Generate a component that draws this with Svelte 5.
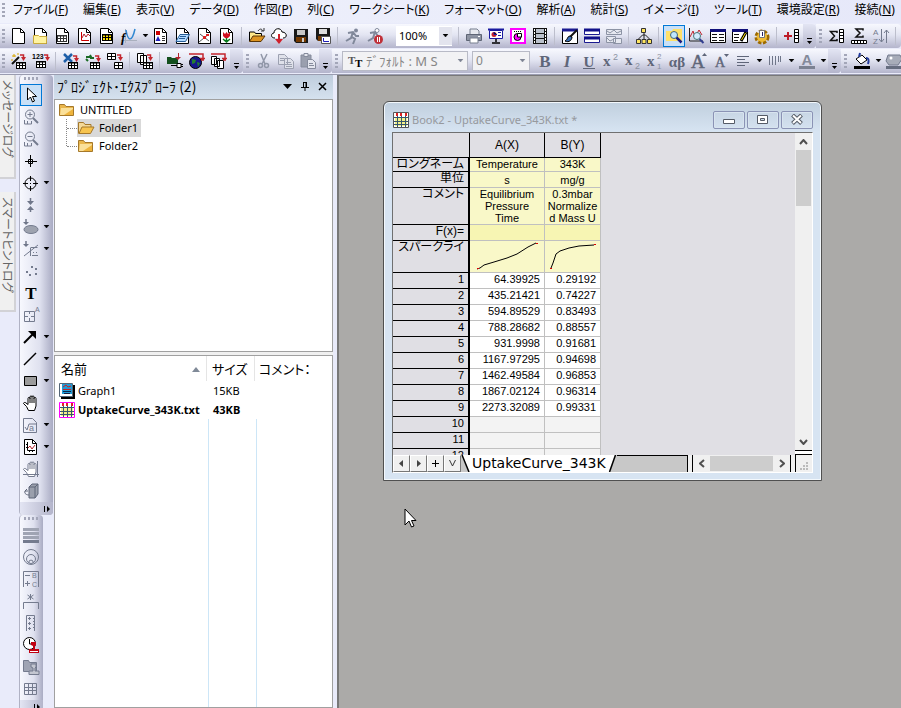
<script lang="ts">
  type Tool = { icon?: string; label?: string; drop?: boolean; active?: boolean; sep?: boolean }

  const sep: Tool = { sep: true }
  const t = (icon: string, label: string, extra: Partial<Tool> = {}): Tool => ({ icon, label, ...extra })

  const menus = [
    ['ファイル', 'F'], ['編集', 'E'], ['表示', 'V'], ['データ', 'D'], ['作図', 'P'],
    ['列', 'C'], ['ワークシート', 'K'], ['フォーマット', 'O'], ['解析', 'A'], ['統計', 'S'],
    ['イメージ', 'I'], ['ツール', 'T'], ['環境設定', 'R'], ['接続', 'N'],
  ]

  const fileTools = [
    t('page', 'New project'), t('pageFolder', 'New folder'), t('pageGrid', 'New workbook'),
    t('pageGraph', 'New graph'), t('pageMatrix', 'New matrix'), t('func', 'New function plot', { drop: true }),
    t('pageLayout', 'New layout'), t('pageNotes', 'New notes'), t('pageExcel', 'New 3D'), t('pageImage', 'New image'),
    sep, t('open', 'Open'), t('cloud', 'Open template'), t('save', 'Save'), t('saveTpl', 'Save template'),
    sep, t('run', 'Recalculate'), t('runStop', 'Stop recalculation'),
  ]
  const viewTools = [
    sep, t('print', 'Print'), t('present', 'Slide show'), t('pinkDoc', 'Send to slides'), t('film', 'Video'),
    sep, t('brush', 'Code builder'), t('split', 'Split'), t('splitOff', 'Merge'),
    sep, t('treeMap', 'Project tree'),
    sep, t('explorer', 'Project explorer', { active: true }), t('viewer', 'Quick viewer'), t('results', 'Results log'),
    t('script', 'Script window'), t('gear', 'Customize'), sep, t('addCol', 'Add column'),
  ]
  const statTools = [t('sumCol', 'Column statistics'), t('sumRow', 'Row statistics'), t('sort', 'Sort'), sep]

  const importTools = [
    t('wand', 'Import wizard'), t('ascii', 'Import ASCII'), sep,
    t('xls', 'Import Excel'), t('reimport', 'Reimport'), t('tables', 'Import tables'), sep,
    t('multi', 'Import multiple ASCII'), sep,
    t('connect', 'Connect file'), t('globe', 'Connect web'), t('pages', 'Connect pages'),
  ]
  const editTools = [t('cut', 'Cut'), t('copy', 'Copy'), t('paste', 'Paste')]
  const formatTools = [
    t('bold', 'Bold'), t('italic', 'Italic'), t('underline', 'Underline'), t('sup', 'Superscript'),
    t('sub', 'Subscript'), t('supsub', 'Super-subscript'), t('greek', 'Greek'), t('bigger', 'Increase font'),
    t('smaller', 'Decrease font'), t('align', 'Align', { drop: true }), t('vert', 'Vertical lines', { drop: true }),
    t('fontColor', 'Font color', { drop: true }),
  ]
  const styleTools = [t('bucket', 'Fill color', { drop: true }), t('palette', 'Palette')]

  const drawTools = [
    t('pointer', 'Pointer', { active: true }), t('zoomIn', 'Zoom in'), t('zoomOut', 'Zoom out'),
    t('reader', 'Screen reader'), t('target', 'Data reader', { drop: true }), t('selector', 'Data selector'),
    t('mask', 'Mask', { drop: true }), t('region', 'Region', { drop: true }), t('dots', 'Draw data'),
    t('text', 'Text'), t('annot', 'Annotation'), t('arrow', 'Arrow', { drop: true }), t('line', 'Line', { drop: true }),
    t('rect', 'Rectangle', { drop: true }), t('hand', 'Pan'), t('sqrt', 'Equation', { drop: true }),
    t('graphIns', 'Insert graph', { drop: true }), t('handAxis', 'Rescale'), t('cube', 'Rotate'),
  ]
  const graphTools = [
    t('bars', 'Layers'), t('rings', 'Contour'), t('legend', 'Legend'), t('bracket', 'Bracket'),
    t('scale', 'Scale'), t('stamp', 'Date stamp'), t('stampOff', 'Project path'), t('table', 'Table'),
  ]

  const P = '<path d="M1.500.500h8l4 4v11h-12z" fill="#fff" stroke="#000"/><path d="M9.500.500v4h4" fill="none" stroke="#000"/>'
  const G = '#747b8e'
  const grid = (x: number, y: number, fill = '#fff', c = '#000') =>
    `<path d="M${x} ${y}h10v7h-10z" fill="${fill}"/><path d="M${x} ${y + 1}h10M${x} ${y + 3.5}h10M${x} ${y + 6.5}h10M${x + 0.5} ${y}v7M${x + 3.5} ${y}v7M${x + 6.5} ${y}v7M${x + 9.5} ${y}v7M${x} ${y + 0.5}h10" stroke="${c}"/>`
  const redArrow = (x: number, y: number) =>
    `<path d="M${x} ${y}h3.500v4" fill="none" stroke="#c3262e" stroke-width="1.500"/><path d="M${x + 1} ${y + 2}h5l-2.500 4z" fill="#c3262e"/>`
  const glyph = (s: string, size = 16, style = '') =>
    `<text x="8" y="14" text-anchor="middle" font-family="Liberation Serif, serif" font-size="${size}" font-weight="bold" fill="#5f6679" ${style}>${s}</text>`
  const base = (y: number) =>
    `<text x="0" y="${y}" font-size="15" font-weight="bold" font-family="Liberation Serif, serif" fill="#5f6679">x</text>`
  const small = (s: string, y: number, size = 9) =>
    `<text x="10" y="${y}" font-size="${size}" font-family="Liberation Sans, sans-serif" fill="#8b92a2">${s}</text>`
  const mag = (s: string) =>
    `<g fill="none" stroke="${G}"><circle cx="7" cy="5.500" r="4.500"/><path d="M10 9l5 5" stroke-width="2"/><path d="M4.500 5.500h5${s}"/><path d="M1.500 11v4h7v-3M4.500 15v-3"/></g>`
  const hand = (c: string) =>
    `<path d="M5.500 15.500l-2-4-3-3c0-1 1.500-1.500 2.500-.5L5 9.500V3.500c0-1.500 2-1.500 2 0V2c0-1.500 2-1.500 2 0v0c0-1.500 2-1.500 2 0v1.500c0-1.500 2-1.500 2 0V11l-1.500 4.500z" fill="#fff" stroke="${c}"/><path d="M7 3v5M9 2v6M11 3v5" stroke="${c}" fill="none"/>`

  const icons: Record<string, string> = {
    page: P,
    pageFolder: P + '<path d="M.5 7.500h5l1 1h7v7H.5z" fill="#fff3a0" stroke="#c9a93a"/>',
    pageGrid: P + grid(2, 7, '#fff', '#333'),
    pageGraph: P + '<path d="M4.500 4v8.500H12" stroke="#c00" fill="none"/><path d="M5 10l2-4 2 3 2-3 2 2" stroke="#b2232c" fill="none"/>',
    pageMatrix: P + grid(3, 6, '#ffe100', '#000'),
    func: '<path d="M4.500 1v14M0 12.500h16" stroke="#aab0be" fill="none"/><path d="M5 2c2 12 6 12 9-1" stroke="#2e86d1" stroke-width="1.500" fill="none"/><text x="0" y="14" font-family="Liberation Serif, serif" font-style="italic" font-weight="bold" font-size="13">f</text>',
    pageLayout: P + '<path d="M3 3h4v4H3z" fill="#c00"/><path d="M2.500 13L5 8l2.500 5z" fill="#22b"/><path d="M9 8.500h3M9 10.500h3M9 12.500h3" stroke="#333"/>',
    pageNotes: P + '<path d="M5 6.500h9.500l-4 7H1z" fill="#b5dbff" stroke="#265d96"/><path d="M5 8.500h6M4 10.500h6" stroke="#265d96"/>',
    pageExcel: P + '<path d="M2 14L12 6M3 6l9 7" stroke="#555"/><path d="M6 8h3v3H6z" fill="#d22"/><path d="M9 6h3v2H9z" fill="#d22"/>',
    pageImage: P + '<path d="M4 4l2 2 1.500-2L9 6l2-2v4l-2 2H6L4 8z" fill="#d01020"/><path d="M7.500 10v5M4 11l3.500 3L11 11" stroke="#087a1c" stroke-width="1.500" fill="none"/>',
    open: '<path d="M.5 13V4h5l1 1.500h6V8" fill="#ffe88a" stroke="#000"/><path d="M.5 13.500L4 8h12l-4 5.500z" fill="#dd9420" stroke="#5a3505"/><path d="M9 3c2-3 4-2 5 0M12 3h3V0" fill="none" stroke="#333"/>',
    cloud: '<path d="M4 10C-1 10 0 5 3 5c0-5 7-6 8-1 5 0 6 6 1 6" fill="#fff" stroke="#000"/><path d="M8 6v7" stroke="#d0202b" stroke-width="2"/><path d="M4 11h8l-4 5z" fill="#d0202b"/>',
    save: '<path d="M1 1h14v14H3l-2-2z" fill="#181818"/><path d="M4 2h8v5H4z" fill="#c6c6c6"/><path d="M3 9h10v5H3z" fill="#733800"/><path d="M9 10h2v4H9z" fill="#ccc"/>',
    saveTpl: '<path d="M1 0h14v13H3l-2-2z" fill="#181818"/><path d="M4 1h8v5H4z" fill="#ddd"/><path d="M3 8h4v5H3z" fill="#733800"/><path d="M6.500 8.500h9v7h-9z" fill="#fff" stroke="#555"/><path d="M8.500 10v3.500H14" stroke="#1c1cb8" fill="none"/>',
    run: '<circle cx="11" cy="2.500" r="2" fill="#80889a"/><path d="M3 5l5-1 3 4h3M8 4l-2 6-5 3M7 9l3 2-2 5" fill="none" stroke="#80889a" stroke-width="2"/>',
    runStop: '<circle cx="10" cy="2.500" r="2" fill="#fff" stroke="#80889a"/><path d="M3 5l5-1 3 4M8 4l-2 6-5 3" fill="none" stroke="#80889a" stroke-width="2"/><circle cx="11.500" cy="11.500" r="4.500" fill="#c03038"/><path d="M10.500 9v5M12.500 9v5" stroke="#fff"/>',
    print: '<path d="M4 1h7l2 2v4H4z" fill="#e7e9ef" stroke="#777e8e"/><path d="M.5 6.500h15v6H.5z" fill="#8e94a3" stroke="#5e6575"/><path d="M4 10h8v5H4z" fill="#fff" stroke="#777e8e"/><path d="M12 8.500h2" stroke="#fff"/>',
    present: '<path d="M0 1.500h16" stroke="#1a1aa0" stroke-width="2"/><path d="M1.500 2.500h13v8h-13z" fill="#fff" stroke="#1a1aa0"/><circle cx="6" cy="6.500" r="2.500" fill="#c8202c"/><path d="M6 4v2.500h3M10 4.500h3M10 7.500h3" stroke="#1a1aa0"/><path d="M8 11v3M4 15h8" stroke="#000" stroke-width="1.500"/>',
    pinkDoc: '<path d="M1 1h14v14H1z" fill="#fff" stroke="#f0f" stroke-width="2"/><circle cx="7.500" cy="9" r="3.500" fill="#f0f" stroke="#000"/><path d="M7.500 9V5.500h4V9z" fill="#fff" stroke="#000"/><path d="M4 3.500h8" stroke="#000" stroke-dasharray="1 1"/>',
    film: '<path d="M1 0h14v16H1z" fill="#111"/><path d="M4 1h8v4H4zM4 6h8v4H4zM4 11h8v4H4z" fill="#bbc1cc"/><path d="M2.500 1v15M13.500 1v15" stroke="#fff" stroke-dasharray="2 1"/>',
    brush: '<path d="M.5 1.500h15v14H.5z" fill="#fff" stroke="#000"/><path d="M0 2h16" stroke="#1a1a90" stroke-width="3"/><path d="M15 2L8 9" stroke="#111" stroke-width="2"/><path d="M8 8c-3 0-2 4-5 5 4 2 7-1 7-4z" fill="#3a70b8" stroke="#000"/>',
    split: '<path d="M.5 1.500h15v5H.5zM.5 9.500h15v5H.5z" fill="#fff" stroke="#1a1a90"/><path d="M0 2h16M0 10h16" stroke="#10108a" stroke-width="3"/>',
    splitOff: '<path d="M.5 1.500h15v5H.5zM.5 8.500h9v6h-9zM7.500 10.500h8v5h-8z" fill="#e6e8f0" stroke="#8c93a4"/><path d="M1 3l3 2 4-3 3 3 4-2M1 10l3 3 4-2" stroke="#8c93a4" fill="none"/>',
    treeMap: '<path d="M8 5v6M2.500 11l4-4h3l4 4" fill="none" stroke="#222"/><path d="M5.500.500h4v4h-4zM.5 11.500h4v4h-4zM6 11.500h4v4H6zM11.500 11.500h4v4h-4z" fill="#ffe560" stroke="#333"/>',
    explorer: '<path d="M0 3h6l1-2h9v12H0z" fill="#ffe169"/><circle cx="8" cy="7" r="3.500" fill="#bfe6ff" stroke="#467"/><path d="M10.500 9.500l5 5" stroke="#1a1a80" stroke-width="2.500"/>',
    viewer: '<path d="M1.500 0v13H15" fill="none" stroke="#222"/><path d="M2 9l3-6 2 6 4-7 3 5" stroke="#c2242e" fill="none"/><circle cx="9" cy="8" r="3.500" fill="#d5ecff" stroke="#477"/><path d="M11.500 11l4 4" stroke="#333f90" stroke-width="2"/>',
    results: '<path d="M.5 1.500h15v13H.5z" fill="#fff" stroke="#000"/><path d="M0 2.500h16" stroke="#10107a" stroke-width="3"/><path d="M2 6.500h5M9 6.500h5M2 9.500h5M9 9.500h5M2 12.500h5M9 12.500h5" stroke="#111"/>',
    script: '<path d="M.5 1.500h15v13H.5z" fill="#fff" stroke="#000"/><path d="M0 2.500h16" stroke="#10107a" stroke-width="3"/><path d="M2 6.500h5M2 9.500h5M2 12.500h4" stroke="#111"/><path d="M14 4l-5 9" stroke="#000" stroke-width="3"/><path d="M13.500 5l-4 7" stroke="#ffe100"/>',
    gear: '<circle cx="8" cy="9" r="5.500" fill="#eebc38" stroke="#9c6a00" stroke-width="4" stroke-dasharray="3 1.500"/><circle cx="8" cy="9" r="5" fill="#eebc38"/><path d="M5.500 2.500h5v7h-5z" fill="#fff" stroke="#777"/><path d="M8.500 4v4" stroke="#226"/>',
    addCol: '<path d="M0 8h8M4 4v8" stroke="#bd1c28" stroke-width="2"/><path d="M10.500 1.500h4v13h-4zM10 4.500h5M10 7.500h5M10 10.500h5" fill="#fff" stroke="#000"/>',
    sumCol: '<path d="M8 5V3.500H1.500l4 4.500-4 4.500H8V11" fill="none" stroke="#111" stroke-width="1.500"/><path d="M10.500 1.500h4v13h-4zM10 4.500h5M10 7.500h5M10 10.500h5" fill="#fff" stroke="#000"/>',
    sumRow: '<path d="M12 2.500V1H5l4 4-4 4h7V7.500" fill="none" stroke="#111" stroke-width="1.500"/><path d="M.5 12.500h15v3H.5zM3.500 12v4M6.500 12v4M9.500 12v4M12.500 12v4" fill="#fff" stroke="#000"/>',
    sort: `<text x="0" y="7" font-size="8" font-family="Liberation Sans, sans-serif" fill="${G}">A</text><text x="0" y="16" font-size="8" font-family="Liberation Sans, sans-serif" fill="${G}">Z</text><path d="M8.500 1v13M6 11l2.500 3 2.500-3M13.500 15V2M11 5l2.500-3L16 5" stroke="${G}" fill="none"/>`,
    wand: '<path d="M1 11l7-7" stroke="#111" stroke-width="2"/><path d="M3 1v3M1 3h4M7 0v2M0 7h2" stroke="#d7a500"/>' + grid(5, 9) + redArrow(9, 2),
    ascii: '<text x="-1" y="6" font-size="7" font-weight="bold" font-family="Liberation Sans, sans-serif">123</text>' + grid(3, 8) + redArrow(11, 2),
    xls: '<path d="M1 1l8 8M9 1L1 9" stroke="#1e5fa8" stroke-width="2.500"/>' + grid(5, 9) + redArrow(10, 3),
    reimport: '<path d="M1 4h5l-1-2M9 5H5M3 8l-2-2" stroke="#1a6a24" stroke-width="2" fill="none"/>' + grid(5, 9) + redArrow(10, 3),
    tables: '<path d="M.5.500h8v6h-8zM0 3.500h9M4.500 0v7" fill="#fff" stroke="#000"/><path d="M7.500 9.500h8v6h-8zM7 12.500h9M11.500 9v7" fill="#fff" stroke="#000"/>' + redArrow(10, 2),
    multi: '<path d="M.5.500h6v9h-6zM3.500 2.500h6v9h-6z" fill="#fff" stroke="#000"/>' + grid(6, 9) + redArrow(10, 2),
    connect: '<path d="M0 4h4l1 1h6v6H0z" fill="#14501e"/><path d="M11.500 0v4" stroke="#b2232c" fill="none"/><path d="M8 4h6l-3 3z" fill="#b2232c"/><path d="M10 10.500h4v4h-4zM14 11.500h2M14 13.500h2M4 12.500h6" stroke="#000" fill="#fff"/>',
    globe: '<circle cx="6.500" cy="9.500" r="6" fill="#16168c" stroke="#000"/><path d="M3 6l4 1-1 3-3 1zM8 9l3 1-2 4z" fill="#23802f"/><path d="M0 1h14v4M11 5.500h5M12 7h3" stroke="#c3262e" fill="none" stroke-width="1.500"/>',
    pages: '<path d="M.5 3.500h5v8h-5zM3.500 5.500h5v8h-5zM6.500 7.500h6v8h-6z" fill="#fff" stroke="#000"/><path d="M0 1h14v4M11 5.500h5M12 7h3" stroke="#c3262e" fill="none" stroke-width="1.500"/>',
    cut: '<path d="M5 1l4 10M11 1L6 11" stroke="#9197a8" stroke-width="1.500"/><circle cx="4.500" cy="12.500" r="2" fill="none" stroke="#9197a8" stroke-width="1.500"/><circle cx="10.500" cy="12.500" r="2" fill="none" stroke="#9197a8" stroke-width="1.500"/>',
    copy: '<path d="M.5 1.500h6l3 3v7h-9zM6.500 5.500h6l3 3v7h-9z" fill="#dfe1ea" stroke="#9ca1b1"/><path d="M2 5.500h4M2 7.500h4M8 9.500h5M8 11.500h6M8 13.500h6" stroke="#9ca1b1"/>',
    paste: '<path d="M1 2h10v12H1z" fill="#9a9fae" stroke="#858b9c"/><path d="M4 .5h4v3H4z" fill="#e4e6ee" stroke="#858b9c"/><path d="M7.500 6.500h5l3 3v6h-8z" fill="#e4e6ee" stroke="#858b9c"/><path d="M9 10.500h4M9 12.500h5" stroke="#858b9c"/>',
    bold: glyph('B', 17),
    italic: glyph('I', 17, 'font-style="italic"'),
    underline: glyph('U', 15) + '<path d="M2 15.500h12" stroke="#5f6679"/>',
    sup: base(13) + small('2', 7),
    sub: base(12) + small('2', 16),
    supsub: base(13) + small('2', 6, 8) + small('1', 16, 8),
    greek: glyph('αβ', 15),
    bigger: '<text x="0" y="15" font-size="19" font-family="Liberation Serif, serif" fill="#5f6679" stroke="#5f6679" stroke-width=".5">A</text><path d="M11 3l2.500-3L16 3z" fill="#5f6679"/>',
    smaller: '<text x="2" y="14" font-size="14" font-family="Liberation Serif, serif" fill="#5f6679" stroke="#5f6679" stroke-width=".4">A</text><path d="M11 1h5l-2.500 3z" fill="#5f6679"/>',
    align: '<path d="M2 3.500h12M2 6.500h8M2 9.500h12M2 12.500h8" stroke="#5f6679"/>',
    vert: '<path d="M2.500 3v9M5.500 3v9M8.500 3v9M11.500 3v6M13.500 3v6" stroke="#6f7689"/>',
    fontColor: '<text x="8" y="12" text-anchor="middle" font-size="15" font-weight="bold" font-family="Liberation Sans, sans-serif" fill="#848a9a">A</text><path d="M0 13h16v3H0z" fill="#7c8292"/>',
    bucket: '<path d="M2 6l6-4 5 5-6 4z" fill="#fff" stroke="#000"/><path d="M5 4l1-4M12 5c3 0 3 3 2 6" stroke="#223a9a" stroke-width="2" fill="none"/><path d="M0 13h16v3H0z" fill="#000"/>',
    palette: '<path d="M2 2h12l2 4-4 6H3L0 8z" fill="#a7acb9" stroke="#747b8e"/><circle cx="5" cy="5" r="1.500" fill="#fff"/><path d="M0 13h16v3H0z" fill="#666d80"/>',
    pointer: '<path d="M4.500 1v12l3-3 2 5 2-1-2-4.500h4z" fill="#fff" stroke="#000"/>',
    zoomIn: mag('M7 3v5'),
    zoomOut: mag(''),
    reader: '<path d="M7.500 2v12M2 8.500h12M5.500 6.500h4v4h-4z" fill="none" stroke="#000"/>',
    target: '<circle cx="7.500" cy="8.500" r="5.500" fill="none" stroke="#000"/><path d="M7.500 1v5M7.500 11v5M0 8.500h5M10 8.500h5M7 8.500h1" stroke="#000"/>',
    selector: '<path d="M7.500 1v4M7.500 11v4" stroke="#6f7689" stroke-width="1.500"/><path d="M4 4h7L7.500 8zM4 13h7l-3.500-4z" fill="#6f7689"/>',
    mask: '<path d="M3 0v4" stroke="#6f7689" stroke-width="1.500"/><path d="M0 3h6L3 6z" fill="#6f7689"/><ellipse cx="8" cy="10.500" rx="7" ry="4" fill="#9ea3af" stroke="#747b8e"/>',
    region: '<path d="M3 0v4" stroke="#6f7689" stroke-width="1.500"/><path d="M0 3h6L3 6z" fill="#6f7689"/><path d="M1 15L15 4M7.500 15V7M7.500 6.500h7M10 11.500h1M13 11.500h1M9 14.500h6" fill="none" stroke="#747b8e"/>',
    dots: '<path d="M3 8h2v2H3zM6 11h2v2H6zM8 3h2v2H8zM12 5h2v2h-2zM12 10h2v2h-2z" fill="#747b8e"/>',
    text: '<text x="8" y="14" text-anchor="middle" font-family="Liberation Serif, serif" font-size="17" font-weight="bold">T</text>',
    annot: `<path d="M1.500 4.500h10v10h-10zM1 9.500h4M8 9.500h4M6.500 4v3M6.500 11v4" fill="none" stroke="${G}"/><text x="12" y="5" font-size="7" fill="${G}" font-family="Liberation Sans, sans-serif">A</text>`,
    arrow: '<path d="M1 14L11 4" stroke="#000" stroke-width="2"/><path d="M5 2h8v8z"/>',
    line: '<path d="M1 14L13 2" stroke="#000" stroke-width="1.500"/>',
    rect: '<path d="M1.500 3.500h12v9h-12z" fill="#9b9b9b" stroke="#000"/>',
    hand: hand('#000'),
    handAxis: hand(G) + `<path d="M0 13.500h16M14.500 0v16" stroke="${G}"/>`,
    sqrt: `<path d="M.5 1.500h9l4 4v10H.5z" fill="none" stroke="${G}"/><path d="M2 10l2 3 2-6h7" stroke="${G}" fill="none"/><text x="6" y="14" font-size="9" fill="${G}" font-family="Liberation Sans, sans-serif">a</text>`,
    graphIns: P + '<path d="M4.500 3v8.500H12" stroke="#000" fill="none"/><path d="M3 5.500h1M3 8.500h1M6.500 12v1M9.500 12v1" stroke="#000"/><path d="M5 9l2-2 2 3 3-4" stroke="#b2232c" fill="none"/>',
    cube: '<path d="M6 4l3-3h6v10l-3 4H6z" fill="#9a9fac" stroke="#5f6679"/><path d="M6 4h6v11M12 4l3-3M5 8H2l2-2M2 8c-1 3 2 4 4 4" fill="none" stroke="#5f6679"/>',
    bars: '<path d="M0 1h16v3H0zM0 5h16v3H0zM0 9h16v3H0z" fill="#9fa4b3"/><path d="M0 13h16v3H0z" fill="#747b8e"/>',
    rings: `<g fill="none" stroke="${G}"><circle cx="8" cy="8" r="7.500"/><circle cx="8" cy="10" r="4.500"/><path d="M6 14v-2l2-1 2 1v2"/></g>`,
    legend: `<path d="M.5 16V.500h15V16M2 4.500h5M2 12.500h5M4.500 10v5" fill="none" stroke="${G}"/><text x="9" y="7" font-size="7" fill="${G}" font-family="Liberation Sans, sans-serif">B</text><text x="9" y="16" font-size="7" fill="${G}" font-family="Liberation Sans, sans-serif">C</text>`,
    bracket: `<path d="M7.500 1v6M4.500 2l6 4M10.500 2l-6 4M.5 16V9.500h15V16" fill="none" stroke="${G}"/>`,
    scale: `<path d="M3.500 16V.500h8V16M5 3.500h3M5 8.500h3M5 13.500h3M6.500 2v3M6.500 7v3M6.500 12v3M10 3.500h1M10 6.500h1M10 9.500h1M10 12.500h1" fill="none" stroke="${G}"/>`,
    stamp: '<circle cx="6.500" cy="6.500" r="6" fill="#fff" stroke="#000"/><path d="M6.500 2v5h3" fill="none" stroke="#000"/><path d="M8 5h5v3l-1 1v3h4v4H6v-4h4V9L8 8z" fill="#c00010"/><path d="M7 14.500h8" stroke="#fff"/>',
    stampOff: '<path d="M.5 1.500h5l1 2h7v9H.5z" fill="#9fa4b3" stroke="#747b8e"/><path d="M8 5h5v3l-1 1v3h4v3.500H6V12h4V9L8 8z" fill="#c3c6d0" stroke="#747b8e"/>',
    table: `<path d="M1.500 2.500h12v11h-12zM1 6.500h13M1 9.500h13M5.500 2v12M9.500 2v12" fill="none" stroke="${G}"/>`,
    folder: '<path d="M.5 13.500v-11h5l1.500 2h7.500v9z" fill="#e9b64c" stroke="#a5782a"/><path d="M1 13l1-7h12v7z" fill="#fae09a"/><path d="M5 13l9-6v6z" fill="#eeb43d"/>',
    folderOpen: '<path d="M.5 13.500v-11h5l1.500 2h6V7" fill="#f4d999" stroke="#a5782a"/><path d="M1 13.500L4 7h12l-3.500 6.500z" fill="#f7c44f" stroke="#a5782a"/>',
    graphFile: '<path d="M2 2h14v14H2z"/><path d="M.5.500h13v13H.5z" fill="#fff" stroke="#567"/><path d="M3 1h10v10H3z" fill="#219bd6"/><path d="M4 4l3-2 2 2 3-1M4 6.500h8" fill="none" stroke="#c22"/><path d="M4 8.500h8M5 10.500h6" stroke="#124"/>',
    bookFile: '<path d="M.5.500h15v15H.5z" fill="#fff" stroke="currentColor"/><path d="M2 6h12v8H2z" fill="#f3f08a"/><path d="M1 5.500h14M1 9.500h14M1 12.500h14M4.500 4v11M8.500 4v11M12.500 4v11" stroke="#35566e"/><path d="M3 1h2v3H3zM7 1h2v3H7zM12 1h2v3h-2z" fill="#d22"/>',
  }

  const tree = [
    { name: 'Folder1', open: true },
    { name: 'Folder2', open: false },
  ]
  const files = [
    { icon: 'graphFile', name: 'Graph1', size: '15KB', bold: false },
    { icon: 'bookFile', name: 'UptakeCurve_343K.txt', size: '43KB', bold: true },
  ]

  const rows = [
    ['64.39925', '0.29192'], ['435.21421', '0.74227'], ['594.89529', '0.83493'],
    ['788.28682', '0.88557'], ['931.9998', '0.91681'], ['1167.97295', '0.94698'],
    ['1462.49584', '0.96853'], ['1867.02124', '0.96314'], ['2273.32089', '0.99331'],
    ['', ''], ['', ''], ['', ''],
  ]
</script>

{#snippet icon(name: string)}
  <svg class="icon" width="18" height="18" viewBox="-1 -1 18 18" aria-hidden="true">{@html icons[name]}</svg>
{/snippet}

{#snippet caret()}
  <svg width="7" height="4" viewBox="0 0 7 4" aria-hidden="true"><path d="M1 0h5L3.500 3z" fill="currentColor" stroke="currentColor" stroke-width=".5" /></svg>
{/snippet}

{#snippet tools(list: Tool[])}
  {#each list as tool}
    {#if tool.sep}
      <span class="sep"></span>
    {:else}
      <button class="tool" class:active={tool.active} aria-label={tool.label}>{@render icon(tool.icon!)}</button>
      {#if tool.drop}
        <button class="drop" aria-label={`${tool.label} options`}>{@render caret()}</button>
      {/if}
    {/if}
  {/each}
{/snippet}

{#snippet cap()}
  <button class="cap" aria-label="Toolbar options">
    <svg width="7" height="7" viewBox="0 0 7 7" aria-hidden="true"><path d="M1 0h5v1H1zM1 3h5L3.500 6z" /></svg>
  </button>
{/snippet}

{#snippet sideCap()}
  <button class="vcap" aria-label="More tools">
    <svg width="7" height="8" viewBox="0 0 7 8" aria-hidden="true"><path d="M0 1h1v6H0zM3 1l3 3-3 3z" /></svg>
  </button>
{/snippet}

<div class="app">
  <nav class="menubar">
    <span class="grip"></span>
    {#each menus as [name, key]}
      <button>{name}(<u>{key}</u>)</button>
    {/each}
  </nav>

  <div class="toolrow">
    <div class="bar">
      <span class="grip"></span>
      {@render tools(fileTools)}
      <label class="combo zoom">
        <select aria-label="Zoom"><option>100%</option></select>
        <span class="arrow">{@render caret()}</span>
      </label>
      {@render tools(viewTools)}
      {@render cap()}
    </div>
    <div class="bar">
      <span class="grip"></span>
      {@render tools(statTools)}
    </div>
  </div>

  <div class="toolrow">
    <div class="bar">
      <span class="grip"></span>
      {@render tools(importTools)}
      {@render cap()}
    </div>
    <div class="bar">
      <span class="grip"></span>
      {@render tools(editTools)}
      {@render cap()}
    </div>
    <div class="bar">
      <span class="grip"></span>
      <label class="combo off font">
        <svg width="18" height="16" viewBox="0 0 18 16" aria-hidden="true">
          <text x="1" y="11" font-size="11" font-weight="bold" font-family="Liberation Serif, serif" fill="#555">T</text>
          <text x="8" y="14" font-size="11" font-weight="bold" font-family="Liberation Serif, serif">T</text>
        </svg>
        <select aria-label="Font"><option>ﾃﾞﾌｫﾙﾄ : M S</option></select>
        <span class="arrow">{@render caret()}</span>
      </label>
      <label class="combo off size">
        <select aria-label="Font size"><option>0</option></select>
        <span class="arrow">{@render caret()}</span>
      </label>
      {@render tools(formatTools)}
      {@render cap()}
    </div>
    <div class="bar">
      <span class="grip"></span>
      {@render tools(styleTools)}
    </div>
  </div>

  <div class="main">
    <div class="logs">
      <button class="log">メッセージログ</button>
      <button class="log tall">スマートヒントログ</button>
    </div>

    <div class="dock">
      <div class="vbar wide">
        <span class="vgrip"></span>
        {#each drawTools as tool}
          <div class="vrow">{@render tools([tool])}</div>
        {/each}
        {@render sideCap()}
      </div>
      <div class="vbar">
        <span class="vgrip"></span>
        {#each graphTools as tool}
          <div class="vrow">{@render tools([tool])}</div>
        {/each}
        {@render sideCap()}
      </div>
    </div>

    <aside class="explorer">
      <header>
        <h2>ﾌﾟﾛｼﾞｪｸﾄ･ｴｸｽﾌﾟﾛｰﾗ (2)</h2>
        <button aria-label="Menu"><svg width="9" height="5" viewBox="0 0 9 5"><path d="M0 0h9L4.500 5z" /></svg></button>
        <button aria-label="Pin"><svg width="8" height="9" viewBox="0 0 8 9"><path d="M2 .5h4M2.500 0v5M5 0v5M0 5.500h8M4 6v3" fill="none" stroke="#000" /><path d="M5 0h1v5H5z" /></svg></button>
        <button aria-label="Close"><svg width="9" height="9" viewBox="0 0 9 9"><path d="M1 1l7 7M8 1L1 8" fill="none" stroke="#000" stroke-width="1.500" /></svg></button>
      </header>
      <div class="tree">
        <div class="node">{@render icon('folder')}<span>UNTITLED</span></div>
        <ul>
          {#each tree as item}
            <li>
              <div class="node" class:selected={item.open}>
                {@render icon(item.open ? 'folderOpen' : 'folder')}<span>{item.name}</span>
              </div>
            </li>
          {/each}
        </ul>
      </div>
      <div class="files">
        <table>
          <thead>
            <tr>
              <th class="name">名前<svg width="8" height="5" viewBox="0 0 8 5"><path d="M0 5h8L4 0z" fill="#808a98" /></svg></th>
              <th class="kb">サイズ</th>
              <th>コメント：</th>
            </tr>
          </thead>
          <tbody>
            {#each files as file}
              <tr class:bold={file.bold}>
                <td><div class="node">{@render icon(file.icon)}<span>{file.name}</span></div></td>
                <td>{file.size}</td>
                <td></td>
              </tr>
            {/each}
          </tbody>
        </table>
        <div class="guides"><span></span><span></span></div>
      </div>
    </aside>

    <main class="workspace">
      <section class="window">
        <header>
          <span class="book">{@render icon('bookFile')}</span>
          <h1>Book2 - UptakeCurve_343K.txt *</h1>
          <button aria-label="Minimize"><svg width="12" height="11" viewBox="0 0 12 11"><path d="M.5 5.500h11v4H.5z" fill="#fff" stroke="#555b66" /></svg></button>
          <button aria-label="Restore"><svg width="12" height="11" viewBox="0 0 12 11"><path d="M.5 1.500h10v8H.5z" fill="#fff" stroke="#555b66" /><path d="M3.500 4.500h4v2h-4z" fill="#cddbe8" stroke="#555b66" /></svg></button>
          <button aria-label="Close"><svg width="12" height="11" viewBox="0 0 12 11"><path d="M1.500 1l9 8.500M10.500 1l-9 8.500" stroke="#555b66" stroke-width="4" /><path d="M2 1.500L10 9M10 1.500L2 9" stroke="#fff" stroke-width="2" /></svg></button>
        </header>
        <div class="client">
          <div class="view">
            <div class="sheet">
              <table>
                <thead>
                  <tr class="cols"><th class="rowhead"></th><th class="a">A(X)</th><th class="b">B(Y)</th></tr>
                </thead>
                <tbody>
                  <tr class="meta"><th>ロングネーム</th><td>Temperature</td><td>343K</td></tr>
                  <tr class="meta unit"><th>単位</th><td>s</td><td>mg/g</td></tr>
                  <tr class="meta note"><th>コメント</th><td>Equilibrium<br />Pressure<br />Time</td><td>0.3mbar<br />Normalize<br />d Mass U</td></tr>
                  <tr class="meta fx"><th>F(x)=</th><td></td><td></td></tr>
                  <tr class="meta spark">
                    <th>スパークライ</th>
                    <td><svg width="74" height="31" viewBox="0 0 74 31"><path d="M7 28l3-1 4-3 10-3 13-4 10-4 11-7 8-4" fill="none" stroke="#000" /><path d="M7 27h2v1H7zM66 2h2v1h-2z" fill="#d00" /></svg></td>
                    <td><svg width="55" height="31" viewBox="0 0 55 31"><path d="M6 27l2-5 3-9 4-3 9-3 10-2 15-1" fill="none" stroke="#000" /><path d="M5 27h2v1H5zM49 3h2v1h-2z" fill="#d00" /></svg></td>
                  </tr>
                  {#each rows as [x, y], i}
                    <tr class="data" class:empty={!x}><th>{i + 1}</th><td>{x}</td><td>{y}</td></tr>
                  {/each}
                </tbody>
              </table>
            </div>
            <div class="vscroll">
              <button aria-label="Scroll up"><svg width="9" height="6" viewBox="0 0 9 6"><path d="M1 5l3.500-4L8 5" /></svg></button>
              <span class="thumb"></span>
              <button aria-label="Scroll down"><svg width="9" height="6" viewBox="0 0 9 6"><path d="M1 1l3.500 4L8 1" /></svg></button>
              <span class="splitter"></span>
            </div>
          </div>
          <footer>
            <button class="nav" aria-label="Previous sheet"><svg width="9" height="9" viewBox="0 0 9 9"><path d="M6 1v7L2 4.500z" fill="#444" /></svg></button>
            <button class="nav" aria-label="Next sheet"><svg width="9" height="9" viewBox="0 0 9 9"><path d="M3 1v7l4-3.500z" fill="#444" /></svg></button>
            <button class="nav" aria-label="Add sheet"><svg width="9" height="9" viewBox="0 0 9 9"><path d="M1 4.500h7M4.500 1v7" stroke="#000" /></svg></button>
            <button class="nav" aria-label="Sheet list"><svg width="9" height="9" viewBox="0 0 9 9"><path d="M1.500 1l3 6 3-6" stroke="#333" fill="none" /></svg></button>
            <div class="tabs">
              <svg width="9" height="17" viewBox="0 0 9 17"><path d="M0 0h9v17H8z" fill="#fff" /><path d="M1 0l7 17" stroke="#000" stroke-width="1.500" /></svg>
              <button class="sheet-tab">UptakeCurve_343K</button>
              <svg width="9" height="17" viewBox="0 0 9 17"><path d="M0 0h7L1 17H0z" fill="#fff" /><path d="M7.500 0l-6 17" stroke="#000" stroke-width="1.500" /></svg>
              <span class="rest"></span>
            </div>
            <div class="hscroll">
              <button aria-label="Scroll left"><svg width="6" height="9" viewBox="0 0 6 9"><path d="M5 1L1 4.500 5 8" /></svg></button>
              <span class="thumb"></span>
              <button aria-label="Scroll right"><svg width="6" height="9" viewBox="0 0 6 9"><path d="M1 1l4 3.500L1 8" /></svg></button>
            </div>
            <span class="resize"><svg width="12" height="9" viewBox="0 0 12 9"><path d="M6 0h2v2H6zM3 3h2v2H3zM6 3h2v2H6zM0 6h2v2H0zM3 6h2v2H3zM6 6h2v2H6z" fill="#bbb" /></svg></span>
          </footer>
        </div>
      </section>
      <svg class="cursor" width="13" height="20" viewBox="0 0 13 20" aria-hidden="true"><path d="M1 1v16l4-4 2.500 6 2.500-1-2.500-5.500H12z" fill="#fff" stroke="#000" /></svg>
    </main>
  </div>
</div>

<style>
  :global(body) { background: #e9ebfa; }

  .app {
    display: flex;
    flex-direction: column;
    height: 100vh;
    overflow: hidden;
    font: 12px/16px "Noto Sans", "Noto Sans CJK JP", sans-serif;
    font-feature-settings: "palt";
    color: #000;
  }
  button { padding: 0; border: 0; background: none; font: inherit; font-feature-settings: inherit; color: inherit; }
  select { appearance: none; border: 0; padding: 0; background: none; color: inherit; font: inherit; min-width: 0; flex: 1; opacity: 1; }
  svg { display: block; flex: none; }
  .icon { overflow: visible; }
  h1, h2 { margin: 0; font-weight: normal; }

  .menubar { display: flex; flex: none; align-items: center; gap: 15px; height: 23px; padding-bottom: 3px; background: linear-gradient(90deg, #f0f2fc, #e6e8f9); white-space: nowrap; box-sizing: border-box; }
  .menubar .grip { margin-right: -7px; }
  .menubar button { flex: none; }

  .toolrow { display: flex; flex: none; height: 25px; padding-top: 1px; box-sizing: border-box; overflow: hidden; }
  .toolrow + .toolrow { height: 26px; }
  .bar { display: flex; flex: none; align-items: center; height: 24px; border-radius: 0 4px 4px 0; background: linear-gradient(#f7f8fe, #e3e5f2 45%, #b4b5cc); }
  .bar:last-child { flex: 1; }
  .grip { flex: none; width: 3px; height: 15px; margin: 0 6px 0 2px; background: repeating-linear-gradient(#a3a6b8 0 2px, transparent 2px 4px); }
  .bar .grip { margin: 0 4px 0 3px; }
  .bar:first-child .grip { margin: 0 3px 0 2px; }

  .tool { display: flex; flex: none; align-items: center; justify-content: center; box-sizing: border-box; width: 22px; height: 22px; }
  .tool.active { border: 1px solid #0078d7; background: #c9e0f7; }
  .drop { flex: none; display: flex; align-items: center; justify-content: center; width: 10px; height: 22px; }
  .sep { flex: none; width: 1px; height: 18px; margin: 0 4px 0 3px; background: #bcbecc; }
  .cap { flex: none; display: flex; align-items: flex-end; justify-content: center; align-self: stretch; width: 13px; padding-bottom: 3px; border-radius: 0 4px 4px 0; background: linear-gradient(#e3e5f3, #b4b5cc); }

  .combo { display: flex; flex: none; align-items: center; box-sizing: border-box; height: 20px; background: #fff; padding-left: 3px; font-size: 12px; }
  .combo .arrow { display: flex; align-items: center; justify-content: center; width: 13px; height: 18px; background: #e3e4ee; }
  .zoom { width: 56px; margin: 0 3px 0 10px; font-size: 11px; }
  .off { border: 1px solid #b8bac6; background: #f2f2f4; color: #868686; }
  .off .arrow { background: none; color: #7c8292; }
  .font { width: 126px; padding-left: 4px; gap: 1px; margin-right: 4px; font-size: 13px; }
  .size { width: 58px; margin-right: 4px; }

  .main { display: flex; flex: 1; min-height: 0; background: #e9ebfa; border-top: 1px solid #9a9cb0; }

  .logs { flex: none; display: flex; flex-direction: column; gap: 13px; width: 19px; }
  .log { width: 16px; height: 104px; box-sizing: border-box; padding-top: 5px; border: solid #d2d2d6; border-width: 0 2px 2px 0; background: #f0f0f0; color: #666; font-size: 12px; line-height: 14px; writing-mode: vertical-rl; text-orientation: sideways; text-align: left; white-space: nowrap; }
  .log.tall { height: 120px; }

  .dock { flex: none; width: 35px; }
  .vbar { width: 24px; padding: 2px 0 0; box-sizing: border-box; border-left: 1px solid #b0b2c4; border-radius: 4px; background: linear-gradient(90deg, #f7f8fe, #dfe1ef 60%, #a9abc3); }
  .vbar.wide { width: 34px; }
  .vbar .drop { width: 8px; }
  .vgrip { display: block; width: 15px; height: 3px; margin: 0 0 4px 4px; background: repeating-linear-gradient(90deg, #a3a6b8 0 2px, transparent 2px 4px); }
  .vrow { display: flex; height: 22px; }
  .vcap { display: flex; align-items: center; justify-content: flex-end; width: 100%; height: 13px; padding-right: 2px; border-radius: 0 0 4px 4px; background: linear-gradient(90deg, #e3e5f3, #b4b5cb); }

  .explorer { flex: none; display: flex; flex-direction: column; width: 279px; background: #f0f0f0; font-size: 11px; }
  .explorer header { flex: none; display: flex; align-items: center; gap: 9px; height: 24px; box-sizing: border-box; padding: 0 6px 2px 3px; background: linear-gradient(#bfcddd, #d5e1ee); }
  .explorer h2 { flex: 1; font-size: 14px; line-height: 16px; white-space: nowrap; font-family: "Noto Sans CJK JP", sans-serif; font-feature-settings: normal; }
  .tree, .files { background: #fff; border: 1px solid #a0a0a0; box-sizing: border-box; }
  .tree { flex: none; height: 253px; padding: 1px 3px; margin-bottom: 3px; }
  .node { display: flex; align-items: center; gap: 2px; height: 18px; width: max-content; padding-right: 3px; }
  .tree .node { gap: 4px; }
  .tree ul { list-style: none; margin: 0 0 0 8px; padding: 0; border-left: 1px dotted #888; height: 27px; }
  .tree li { display: flex; align-items: center; }
  .tree li::before { content: ''; width: 10px; border-top: 1px dotted #888; }
  .selected { background: #d9d9d9; }

  .files { flex: 1; display: flex; flex-direction: column; min-height: 0; }
  .files table { width: 100%; border-spacing: 0; table-layout: fixed; }
  .files th { height: 25px; box-sizing: border-box; padding: 0 0 0 5px; text-align: left; font-weight: normal; font-size: 13px; border-right: 1px solid #e5e5e5; white-space: nowrap; }
  .files th:last-child { border: 0; padding-left: 4px; }
  .files .name { width: 152px; padding-left: 6px; }
  .files .name svg { float: right; margin: 6px 6px 0 0; }
  .files .kb { width: 48px; }
  .files td { padding: 0 0 0 6px; height: 19px; white-space: nowrap; }
  .files td:first-child { padding-left: 3px; color: #f0f; }
  .files td span { color: #000; }
  .bold { font-weight: bold; }
  .guides { flex: 1; display: flex; padding-left: 153px; }
  .guides span { width: 47px; border-left: 1px solid #cde6f7; }

  .workspace { position: relative; flex: 1; margin-left: 4px; overflow: hidden; border-left: 2px solid #787878; border-top: 1px solid #787878; background: #abaaa8; }
  .window { position: absolute; left: 44px; top: 25px; width: 439px; height: 380px; box-sizing: border-box; display: flex; flex-direction: column; padding: 0 8px 7px; border: 1px solid #505050; border-radius: 6px 6px 0 0; background: linear-gradient(#c0cfde, #d7e4f2 30px); box-shadow: inset 0 0 0 1px #f3f8fc; }
  .window header { flex: none; display: flex; align-items: center; gap: 2px; height: 30px; padding: 5px 0 0; box-sizing: border-box; }
  .book { color: #555; }
  .window h1 { flex: 1; font-size: 11px; line-height: 16px; color: #96999e; white-space: nowrap; }
  .window header button { display: flex; align-items: center; justify-content: center; width: 32px; height: 18px; box-sizing: border-box; border: 1px solid #8b93b5; border-radius: 2px; box-shadow: inset 0 0 0 1px #d8e4ef; }

  .client { flex: 1; min-height: 0; display: flex; flex-direction: column; border: 1px solid #707070; border-right-color: #fff; border-bottom-color: #fff; background: #e0dfe4; }
  .view { flex: 1; min-height: 0; display: flex; }
  .sheet { flex: 1; overflow: hidden; font: 11px/12px "Liberation Sans", "Noto Sans CJK JP", sans-serif; font-feature-settings: "palt"; }
  .sheet table { width: 208px; border-spacing: 0; table-layout: fixed; }
  .sheet th, .sheet td { box-sizing: border-box; padding: 0; font-weight: normal; white-space: nowrap; overflow: hidden; vertical-align: top; }
  .sheet tbody th { padding-right: 4px; text-align: right; border-right: 2px solid #000; border-bottom: 1px solid #000; }
  .sheet .meta th { font-size: 12px; }
  .sheet td { border-right: 1px solid #c0c0c0; border-bottom: 1px solid #c0c0c0; }
  .sheet .cols th { height: 25px; vertical-align: middle; border-right: 1px solid #000; border-bottom: 1px solid #000; font-size: 12px; }
  .rowhead { width: 77px; }
  .a { width: 75px; }
  .b { width: 56px; }
  .meta { height: 14px; }
  .meta td { background: #f9f8c8; text-align: center; }
  .unit, .fx { height: 16px; }
  .sheet .unit td { vertical-align: middle; }
  .note { height: 36px; }
  .fx td { background: #f7f5b3; }
  .spark { height: 32px; }
  .data { height: 16px; }
  .data td { background: #fff; text-align: right; padding-right: 4px; }
  .sheet .data td { padding-right: 4px; }
  .data.empty td { background: #f3f3f3; }

  .vscroll { flex: none; display: flex; flex-direction: column; align-items: center; width: 17px; background: #f0f0f0; }
  .vscroll button, .hscroll button { display: flex; align-items: center; justify-content: center; width: 17px; height: 17px; }
  .vscroll path, .hscroll path { fill: none; stroke: #505050; stroke-width: 2; }
  .vscroll .thumb { width: 15px; height: 56px; margin-bottom: auto; background: #cdcdcd; }
  .splitter { width: 17px; height: 5px; box-sizing: border-box; border-top: 1px solid #000; border-bottom: 1px solid #000; background: #fff; }

  .client footer { flex: none; display: flex; height: 17px; background: #f0f0f0; }
  .nav { display: flex; align-items: center; justify-content: center; width: 17px; box-sizing: border-box; border: 1px solid #777; border-left-color: #fff; border-top-color: #fff; background: #f0f0f0; }
  .tabs { flex: 1; display: flex; background: #c8c8c8; }
  .sheet-tab { padding: 0 2px; background: #fff; font: 14px/17px "DejaVu Sans", sans-serif; }
  .rest { flex: 1; border: 1px solid #000; border-width: 1px 1px 0 0; }
  .hscroll { display: flex; width: 97px; margin: 0 4px; border: solid #000; border-width: 0 1px; }
  .hscroll .thumb { flex: 1; margin: 1px 0; background: #cdcdcd; }
  .resize { display: flex; align-items: flex-end; justify-content: flex-end; width: 16px; padding-bottom: 1px; border-left: 1px solid #000; }

  .cursor { position: absolute; left: 65px; top: 432px; }
</style>
